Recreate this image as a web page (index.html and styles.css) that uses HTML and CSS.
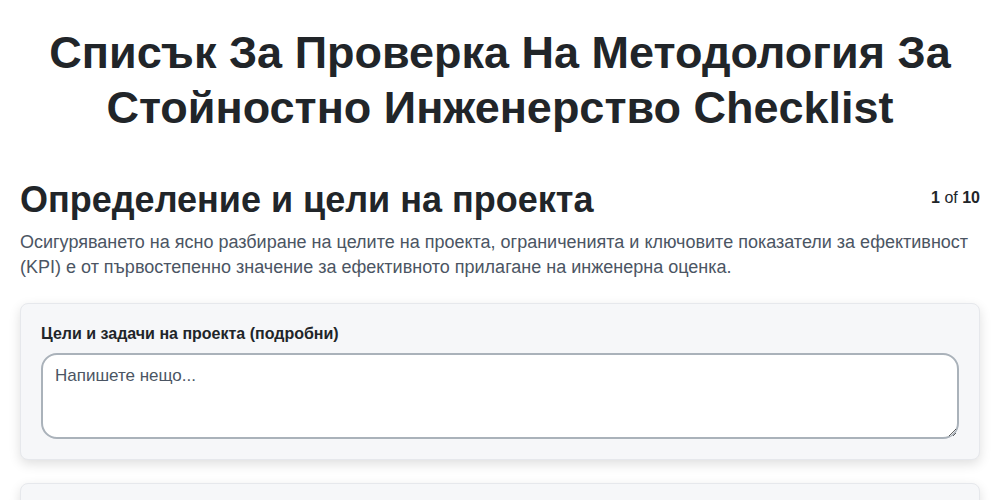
FILE: index.html
```html
<!DOCTYPE html>
<html lang="bg">
<head>
<meta charset="utf-8">
<title>Checklist</title>
<link rel="stylesheet" href="styles.css">
</head>
<body>
<div class="page">
  <h1 class="title">Списък За Проверка На Методология За Стойностно Инженерство Checklist</h1>
  <section class="section">
    <div class="section-head">
      <h2 class="section-title">Определение и цели на проекта</h2>
      <div class="counter"><b>1</b> of <b>10</b></div>
    </div>
    <p class="section-desc">Осигуряването на ясно разбиране на целите на проекта, ограниченията и ключовите показатели за ефективност (KPI) е от първостепенно значение за ефективното прилагане на инженерна оценка.</p>
    <div class="card">
      <label class="field-label" for="goals">Цели и задачи на проекта (подробни)</label>
      <textarea id="goals" class="field-input" placeholder="Напишете нещо..."></textarea>
    </div>
    <div class="card"></div>
  </section>
</div>
</body>
</html>
```
FILE: styles.css
```css
* { box-sizing: border-box; }
html, body { margin: 0; padding: 0; background: #ffffff; }
body {
  font-family: "Liberation Sans", Arial, sans-serif;
  color: #212529;
}
.page {
  padding: 0 20px;
}
.title {
  margin: 0;
  padding: 25px 0 0;
  text-align: center;
  font-size: 45px;
  line-height: 55px;
  font-weight: 700;
  color: #212529;
}
.section {
  margin-top: 43px;
}
.section-head {
  display: flex;
  justify-content: space-between;
  align-items: flex-start;
}
.section-title {
  margin: 0;
  font-size: 36px;
  line-height: 44px;
  font-weight: 700;
  color: #212529;
}
.counter {
  font-size: 16px;
  line-height: 20px;
  padding-top: 10px;
  color: #212529;
}
.section-desc {
  margin: 8px 0 0;
  font-size: 18px;
  line-height: 25px;
  color: #4b5563;
}
.card {
  margin-top: 23px;
  background: #f6f7f9;
  border: 1px solid #e6e8ec;
  border-radius: 8px;
  padding: 20px 20px 20px;
  box-shadow: 0 4px 12px rgba(0, 0, 0, 0.13);
  min-height: 60px;
}
.field-label {
  display: block;
  font-size: 16px;
  line-height: 20px;
  font-weight: 700;
  color: #212529;
  margin-bottom: 9px;
}
.field-input {
  display: block;
  width: 100%;
  height: 86px;
  border: 2px solid #aab2ba;
  border-radius: 16px;
  background: #ffffff;
  padding: 11px 12px;
  font-family: "Liberation Sans", Arial, sans-serif;
  font-size: 17px;
  line-height: 20px;
  color: #212529;
  resize: vertical;
}
.field-input::placeholder {
  color: #4b5563;
  opacity: 1;
}
```
